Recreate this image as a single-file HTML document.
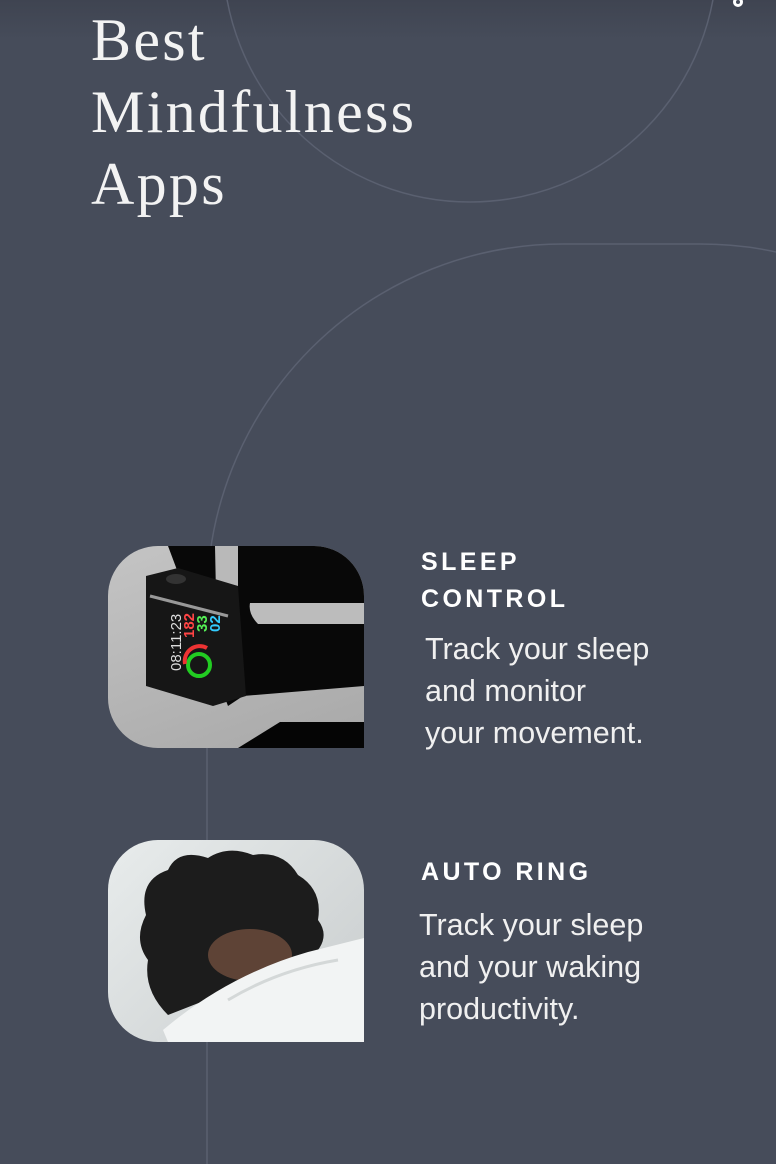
<!DOCTYPE html>
<html><head><meta charset="utf-8">
<style>
html,body{margin:0;padding:0}
body{width:776px;height:1164px;overflow:hidden;position:relative;background:#464c5a;font-family:"Liberation Sans",sans-serif;color:#fff}
.topshade{position:absolute;left:0;top:0;width:776px;height:40px;background:linear-gradient(#3f4451,#464c5a)}
svg.bg{position:absolute;left:0;top:0}
h1{position:absolute;left:91px;top:4px;margin:0;font-family:"Liberation Serif",serif;font-weight:normal;font-size:60px;line-height:72px;color:#f3f3f3;letter-spacing:2.3px}
.img{position:absolute;left:108px;width:256px;height:202px;border-radius:50px 50px 0 50px;overflow:hidden}
.t{position:absolute;font-weight:bold;font-size:25px;letter-spacing:3.4px;line-height:37px}
.d{position:absolute;font-size:30.5px;line-height:42px;color:#f0f0f0}
</style></head><body>
<div class="topshade"></div>
<svg class="bg" width="776" height="1164">
<circle cx="470" cy="-45" r="247" fill="none" stroke="#5a6070" stroke-width="1.5"/>
<path d="M207 1164 V600 A356 356 0 0 1 563 244 H700 Q740 244 776 252" fill="none" stroke="#5a6070" stroke-width="1.5"/>
<circle cx="738" cy="2" r="5" fill="#fff"/><circle cx="738" cy="2" r="2" fill="#464c5a"/>
</svg>
<h1>Best<br>Mindfulness<br>Apps</h1>

<div class="img" style="top:546px;background:linear-gradient(160deg,#c4c4c4,#a8a8a8)">
<svg width="256" height="202">
<path d="M60 0 H256 V140 L135 150 L120 160 Z" fill="#080808"/>
<path d="M107 0 H130 V45 Q118 50 108 48 Z" fill="#b9b9b9"/>
<path d="M142 57 H256 V78 H150 Q140 68 142 57 Z" fill="#bcbcbc"/>
<path d="M38 30 L70 22 L130 40 L138 150 L105 160 L38 140 Z" fill="#161616"/>
<ellipse cx="68" cy="33" rx="10" ry="5" fill="#333"/>
<path d="M42 50 L120 70" stroke="#999" stroke-width="3"/>
<text x="0" y="0" transform="translate(73,125) rotate(-90)" font-size="15" fill="#ddd" font-family="Liberation Sans">08:11:23</text>
<text x="0" y="0" transform="translate(86,92) rotate(-90)" font-size="15" fill="#f44" font-weight="bold" font-family="Liberation Sans">182</text>
<text x="0" y="0" transform="translate(99,86) rotate(-90)" font-size="15" fill="#5e5" font-weight="bold" font-family="Liberation Sans">33</text>
<text x="0" y="0" transform="translate(112,86) rotate(-90)" font-size="15" fill="#3cf" font-weight="bold" font-family="Liberation Sans">02</text>
<circle cx="91" cy="119" r="11" fill="none" stroke="#2c2" stroke-width="4"/>
<path d="M77 118 A15 15 0 0 1 99 102" fill="none" stroke="#e33" stroke-width="4"/>
<path d="M130 202 L172 176 H256 V202 Z" fill="#050505"/>
</svg></div>

<div class="img" style="top:840px;background:linear-gradient(135deg,#e8ecec,#c8cccd)">
<svg width="256" height="202">
<path d="M38 75 Q30 40 60 30 Q70 8 100 18 Q120 5 145 15 Q175 10 190 35 Q215 50 210 80 Q225 100 200 120 L60 175 Q35 150 40 120 Q25 100 38 75 Z" fill="#1c1c1c"/>
<ellipse cx="142" cy="115" rx="42" ry="26" fill="#5e4336"/>
<path d="M55 190 Q120 135 200 112 Q240 102 256 98 V202 H60 Z" fill="#f2f4f4"/>
<path d="M120 160 Q170 130 230 120" fill="none" stroke="#d4d8d8" stroke-width="3"/>
</svg></div>

<div class="t" style="left:421px;top:544px">SLEEP<br>CONTROL</div>
<div class="d" style="left:425px;top:628px">Track your sleep<br>and monitor<br>your movement.</div>
<div class="t" style="left:421px;top:854px">AUTO RING</div>
<div class="d" style="left:419px;top:904px">Track your sleep<br>and your waking<br>productivity.</div>
</body></html>
